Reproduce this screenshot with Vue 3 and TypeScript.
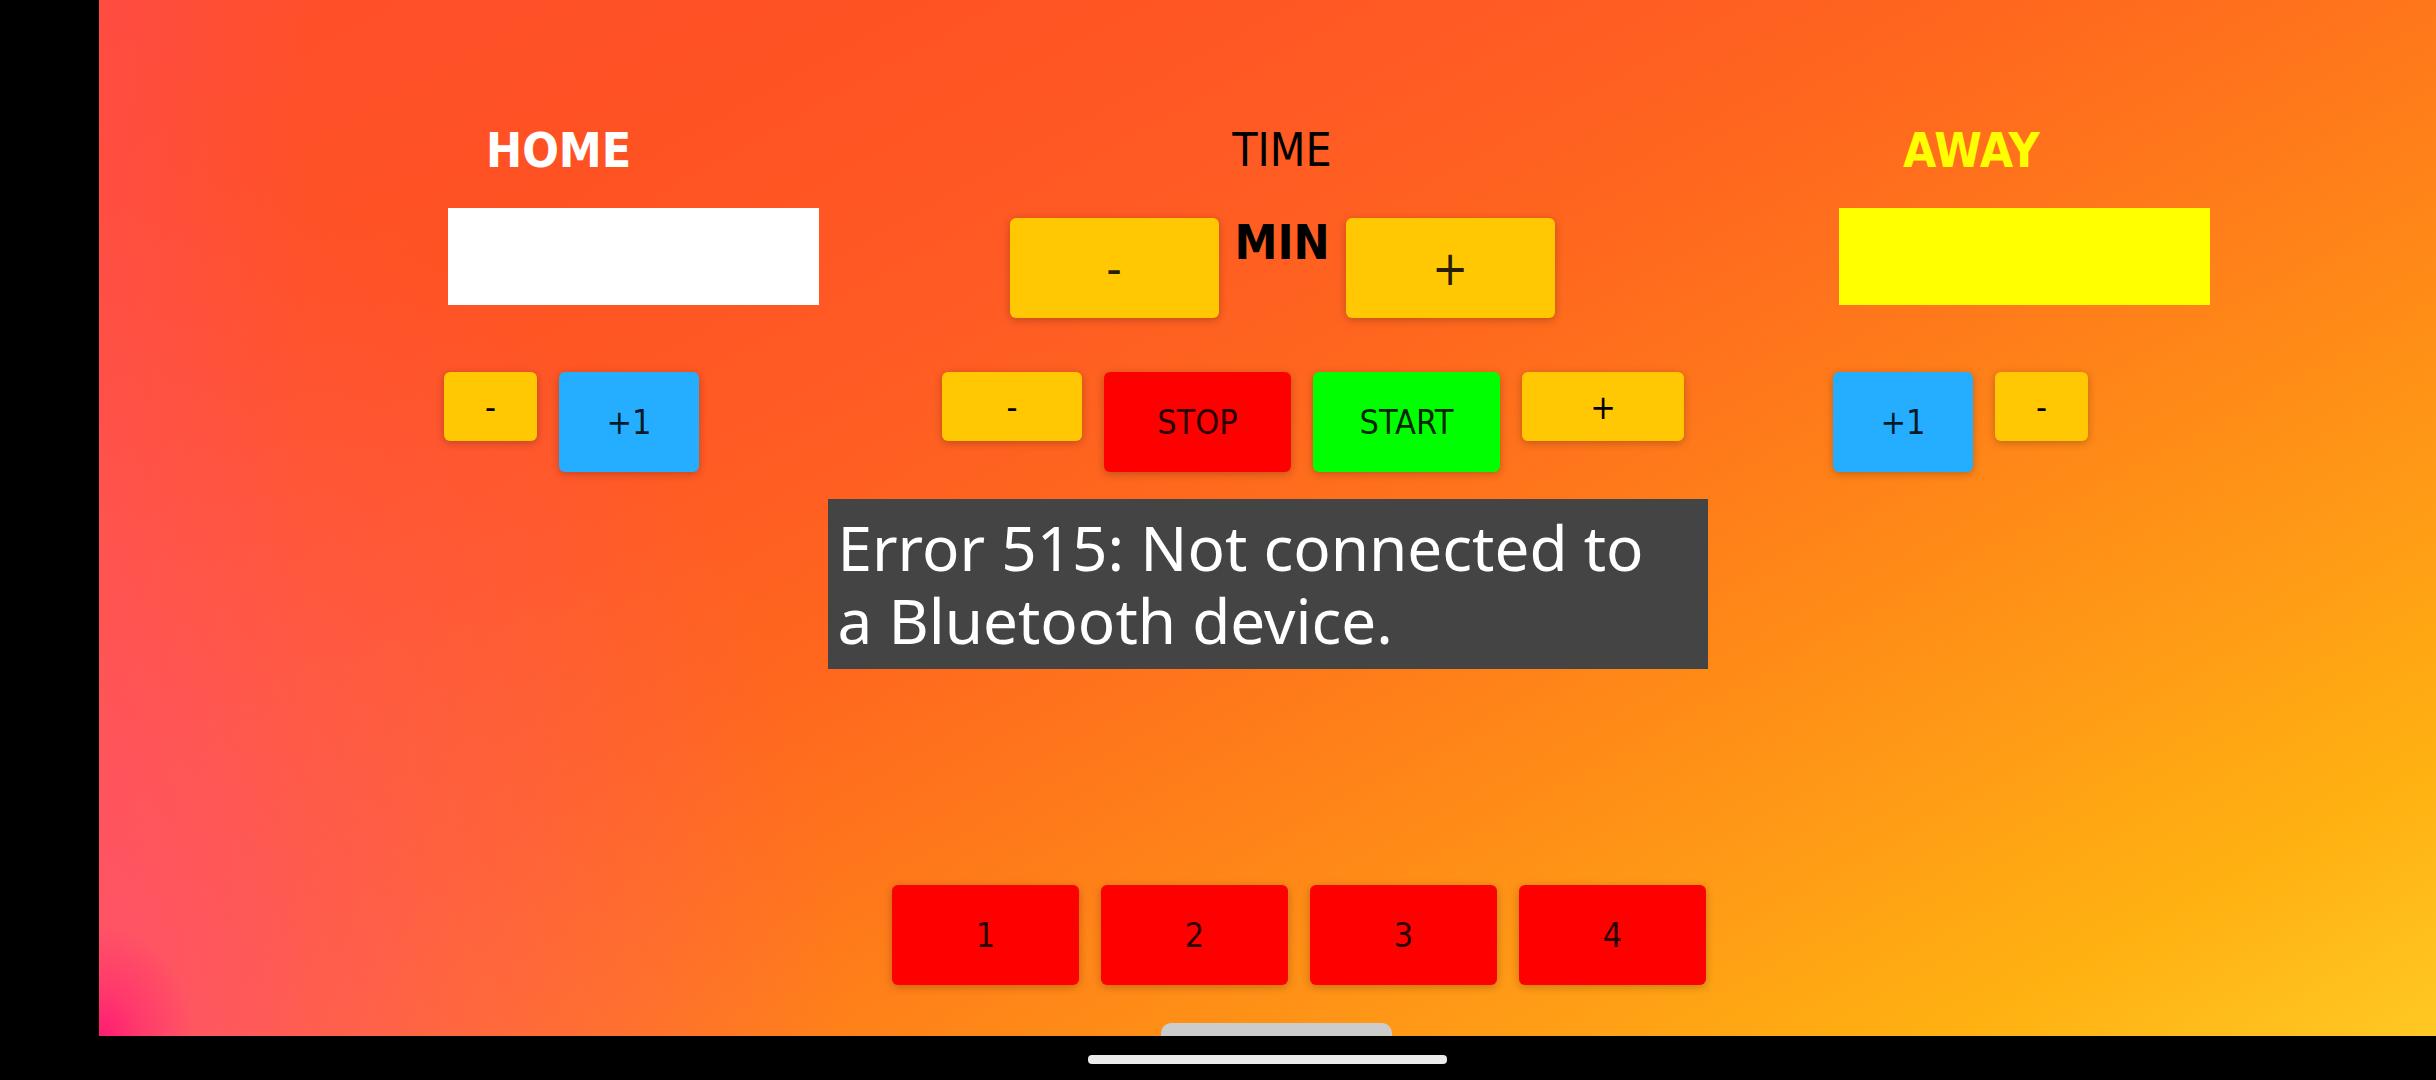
<script setup lang="ts">
import { ref } from 'vue'

const home = ref<number | null>(null)
const away = ref<number | null>(null)
const running = ref(false)
const message = ref('Error 515: Not connected to\na Bluetooth device.')
const presets: number[] = [1, 2, 3, 4]

function bump(team: 'home' | 'away', step: number): void {
  const score = team === 'home' ? home : away
  score.value = Math.max(0, (score.value ?? 0) + step)
}
</script>

<template>
  <div class="device">
    <main class="screen">
      <div class="board">
        <section class="team home">
          <h2 class="label team-name">HOME</h2>
          <div class="body"><output class="score" aria-label="Home score">{{ home }}</output></div>
          <div class="controls">
            <button class="btn amber small narrow" type="button" @click="bump('home', -1)">-</button>
            <button class="btn blue" type="button" @click="bump('home', 1)">+1</button>
          </div>
        </section>

        <section class="clock">
          <div class="clock-head">
            <h2 class="label time">TIME</h2>
            <div class="minutes">
              <button class="btn amber large" type="button">-</button>
              <span class="min">MIN</span>
              <button class="btn amber large" type="button">+</button>
            </div>
          </div>
          <div class="controls">
            <button class="btn amber small" type="button">-</button>
            <button class="btn red wide" type="button" @click="running = false">STOP</button>
            <button class="btn green wide" type="button" @click="running = true">START</button>
            <button class="btn amber small medium" type="button">+</button>
          </div>
        </section>

        <section class="team away">
          <h2 class="label team-name">AWAY</h2>
          <div class="body"><output class="score" aria-label="Away score">{{ away }}</output></div>
          <div class="controls">
            <button class="btn blue" type="button" @click="bump('away', 1)">+1</button>
            <button class="btn amber small narrow" type="button" @click="bump('away', -1)">-</button>
          </div>
        </section>
      </div>

      <p class="notice" role="alert">{{ message }}</p>

      <div class="presets">
        <button v-for="n in presets" :key="n" class="btn red wide" type="button">{{ n }}</button>
      </div>
      <div class="drawer"><button class="tab" type="button" aria-label="Open panel"></button></div>
    </main>
    <footer class="nav"><span class="handle"></span></footer>
  </div>
</template>

<style>
body {
  margin: 0;
  background: #000;
}
</style>

<style scoped>
.device {
  box-sizing: border-box;
  min-height: 100vh;
  display: flex;
  flex-direction: column;
  padding-left: 99px;
  background: #000;
  font-family: "DejaVu Sans Condensed", "DejaVu Sans", sans-serif;
}

.screen {
  flex: 1;
  display: flex;
  flex-direction: column;
  background:
    radial-gradient(ellipse 95px 110px at 0 100%, #ff1f72 5%, #ff2a6e99 45%, #ff408000 100%),
    radial-gradient(ellipse 32% 85% at 0 100%, #ff5078cc 0, #ff587066 50%, #ff587000 100%),
    linear-gradient(90deg, #ff487055 0, #ff487000 9%),
    linear-gradient(151deg, #ff4e2c 0, #ff5223 19%, #ff5a24 33%, #ff661e 45%, #ff771b 56%, #ff8a17 67%, #ff9a16 76%, #ffb011 88%, #ffc823 100%);
}

.board {
  display: grid;
  grid-template-columns: 345fr 375fr 123fr 742fr 149fr 377fr 226fr;
  padding-top: 110px;
}

.home { grid-column: 2; color: #fff; --offset: 42px; }
.clock { grid-column: 4; color: #000; }
.away { grid-column: 6; color: #ff0; --offset: 70px; }

.label {
  margin: 0;
  height: 80px;
  line-height: 80px;
  font-weight: 400;
}

.team-name {
  padding-left: var(--offset);
  font-size: 48px;
  font-weight: 700;
}

.body {
  box-sizing: border-box;
  height: 182px;
  padding: 18px 0 0 4px;
}

.away .body { padding-left: 6px; }

.score {
  display: block;
  height: 97px;
  background: currentColor;
}

.clock-head {
  height: 262px;
  padding-right: 62px;
  text-align: center;
}

.time { font-size: 46px; }

.minutes {
  display: flex;
  justify-content: center;
  padding-top: 28px;
}

.min {
  width: 127px;
  line-height: 48px;
  font-size: 48px;
  font-weight: 700;
}

.controls {
  display: flex;
  align-items: flex-start;
  gap: 22px;
}

.btn {
  width: 140px;
  height: 100px;
  padding: 0;
  border: 0;
  border-radius: 6px;
  font-family: inherit;
  font-size: 34px;
  color: rgba(0, 0, 0, 0.87);
  box-shadow: 0 2px 8px rgba(0, 0, 0, 0.24);
}

.small { height: 69px; color: #000; }
.narrow { width: 93px; }
.medium { width: 162px; }
.wide { width: 187px; }
.large { width: 209px; font-size: 48px; }

.amber { background: #ffc803; }
.blue { background: #25adff; }
.red { background: #f00; }
.green { background: #0f0; }

.notice {
  box-sizing: border-box;
  width: 880px;
  max-width: 100%;
  margin: 27px auto 0;
  padding: 12px 10px;
  background: #444;
  color: #fff;
  font-family: "Noto Sans", "Open Sans", sans-serif;
  font-size: 62px;
  line-height: 73px;
  white-space: pre-line;
}

.presets {
  display: flex;
  justify-content: center;
  gap: 22px;
  margin-top: auto;
  padding: 48px 0 38px 63px;
}

.drawer {
  display: flex;
  justify-content: center;
  padding-left: 18px;
}

.tab {
  width: 231px;
  height: 13px;
  padding: 0;
  border: 0;
  border-radius: 10px 10px 0 0;
  background: #ccc;
}

.nav {
  display: flex;
  justify-content: center;
  padding: 19px 0 16px;
}

.handle {
  width: 359px;
  height: 9px;
  border-radius: 4px;
  background: #ebebeb;
}
</style>
